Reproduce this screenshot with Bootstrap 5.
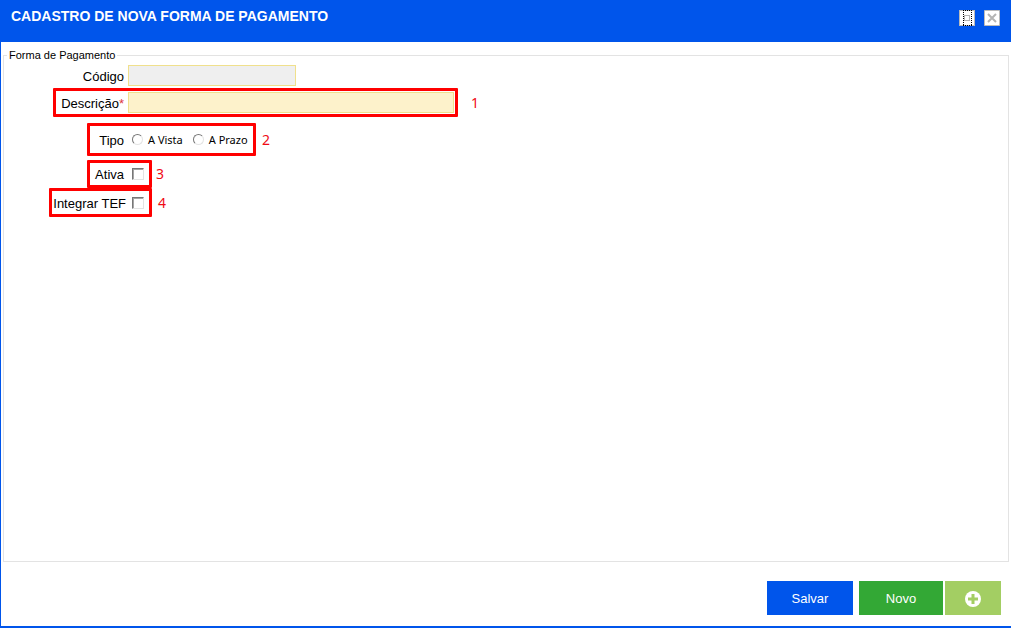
<!DOCTYPE html>
<html lang="pt-BR">
<head>
<meta charset="utf-8">
<meta name="viewport" content="width=device-width, initial-scale=1">
<title>Cadastro de nova forma de pagamento</title>
<link rel="stylesheet" href="https://cdn.jsdelivr.net/npm/bootstrap@5.3.0/dist/css/bootstrap.min.css">
<style>
  :root { --brand: #0055eb; }
  body { font-family: "Liberation Sans", Arial, sans-serif; font-size: 13px; line-height: 16px; color: #000; background: #fff; }
  .window { border-left: 1px solid var(--brand); border-bottom: 2px solid var(--brand); }
  .titlebar { background: var(--brand); color: #fff; height: 42px; padding: 8px 11px 0 10px; }
  .titlebar h1 { font-size: 14px; line-height: 16px; font-weight: 700; }
  .tools { gap: 9px; }
  .tool { width: 16px; height: 16px; margin-top: 2px; }
  .tool svg { width: 16px; height: 16px; display: block; }
  .group { border: 1px solid #e3e3e3; margin: 7px 2px 0; padding-top: 3px; }
  .group legend { font-size: 11px; line-height: 13px; margin-left: 3px; padding: 0 2px; }
  .field-label { white-space: nowrap; text-align: right; margin-right: 4px; padding-top: 2px; }
  .text-field { height: 21px; border: 1px solid #f0e08c; border-radius: 0; background: #fdf2cb; padding: 1px 4px; font-size: 13px; }
  .text-field:disabled { background: #efefef; }
  .code-row { margin: 0 0 2px 52px; }
  .code-row .field-label { width: 68px; }
  .code-row .text-field { width: 168px; }
  .type-row { margin-top: 6px; }
  .marked { border: 3px solid #f00; border-radius: 1px; }
  .mark-wide { margin-left: 49px; height: 29px; }
  .mark-wide .field-label { width: 68px; }
  .mark-wide .text-field { width: 326px; margin-right: 1px; }
  .mark-tipo, .mark-ativa { margin-left: 83px; }
  .mark-tipo .field-label, .mark-ativa .field-label { width: 34px; }
  .mark-tipo { height: 33px; width: 169px; }
  .mark-ativa { height: 28px; width: 65px; }
  .mark-tef { margin-left: 45px; height: 29px; width: 103px; }
  .mark-tef .field-label { width: 74px; margin-right: 2px; }
  .mark-number { font: 14px/20px "Noto Sans", sans-serif; color: #f00a14; margin-left: 6px; }
  .mark-wide + .mark-number { margin-left: 13px; }
  .choice { appearance: none; margin: 0 0 0 4px; width: 12px; height: 12px; background: #fff; border: 1px solid; border-color: #777 #e3e3e3 #e3e3e3 #777; flex: none; }
  .choice[type=checkbox] { box-shadow: inset 1px 1px #a5a5a5; }
  .choice[type=radio] { border-radius: 50%; width: 11px; height: 11px; }
  .choice:checked { background: #333; background-clip: content-box; padding: 2px; }
  .option-label { font: 11px/16px "Noto Sans", Tahoma, sans-serif; white-space: nowrap; margin-left: 5px; }
  .option-label + .choice { margin-left: 10px; }
  .actions { padding: 19px 10px 11px; }
  .action { height: 34px; border: 0; border-radius: 0; padding: 1px 0 0; color: #fff; font-size: 13px; }
  .action:hover { color: #fff; filter: brightness(.95); }
  .save { background: var(--brand); width: 86px; margin-right: 6px; }
  .new { background: #33a835; width: 84px; margin-right: 2px; }
  .more { background: #a3ce63; width: 56px; }
</style>
</head>
<body>
<div class="window min-vh-100 d-flex flex-column">
  <header class="titlebar d-flex justify-content-between">
    <h1 class="m-0">CADASTRO DE NOVA FORMA DE PAGAMENTO</h1>
    <div class="tools d-flex">
      <button type="button" class="tool btn p-0 border-0" aria-label="Maximizar">
        <svg viewBox="0 0 16 16" shape-rendering="crispEdges"><path fill="#fff" stroke="#bbb" d="M.5.5h15v15H.5z"/><path fill="none" stroke="#b4b4b4" d="M5.500 5.500h5v5h-5z"/><path fill="none" stroke="#000" stroke-dasharray="1 1" d="M4 .5h9M4 15.500h9M4.500 0v16M12.500 0v16"/></svg>
      </button>
      <button type="button" class="tool btn p-0 border-0" aria-label="Fechar">
        <svg viewBox="0 0 16 16"><path fill="#fff" stroke="#bbb" d="M.5.5h15v15H.5z"/><path fill="none" stroke="#b4b4b4" stroke-width="2" d="M4 4l8 8M12 4l-8 8"/></svg>
      </button>
    </div>
  </header>
  <form class="flex-grow-1 d-flex flex-column" onsubmit="return false">
    <fieldset class="group flex-grow-1">
      <legend class="float-none w-auto mb-0">Forma de Pagamento</legend>
      <div class="code-row d-flex align-items-center">
        <label class="field-label" for="codigo">Código</label>
        <input id="codigo" class="text-field" type="text" disabled>
      </div>
      <div class="d-flex align-items-center">
        <div class="marked mark-wide d-flex align-items-center">
          <label class="field-label" for="descricao">Descrição<span class="text-danger">*</span></label>
          <input id="descricao" class="text-field" type="text" required>
        </div>
        <span class="mark-number">1</span>
      </div>
      <div class="type-row d-flex align-items-center">
        <div class="marked mark-tipo d-flex align-items-center" role="radiogroup" aria-labelledby="tipo">
          <span class="field-label" id="tipo">Tipo</span>
          <input class="choice" type="radio" name="tipo" id="vista"><label class="option-label" for="vista">A Vista</label>
          <input class="choice" type="radio" name="tipo" id="prazo"><label class="option-label" for="prazo">A Prazo</label>
        </div>
        <span class="mark-number">2</span>
      </div>
      <div class="d-flex align-items-center mt-1">
        <div class="marked mark-ativa d-flex align-items-center">
          <label class="field-label" for="ativa">Ativa</label><input class="choice" type="checkbox" id="ativa">
        </div>
        <span class="mark-number ms-1">3</span>
      </div>
      <div class="d-flex align-items-center">
        <div class="marked mark-tef d-flex align-items-center">
          <label class="field-label" for="tef">Integrar TEF</label><input class="choice" type="checkbox" id="tef">
        </div>
        <span class="mark-number">4</span>
      </div>
    </fieldset>
    <footer class="actions d-flex justify-content-end">
      <button type="submit" class="action btn save">Salvar</button>
      <button type="button" class="action btn new">Novo</button>
      <button type="button" class="action btn more d-flex align-items-center justify-content-center" aria-label="Adicionar">
        <svg width="16" height="16" viewBox="0 0 16 16"><circle cx="8" cy="8" r="8" fill="#fff"/><path fill="none" stroke="#a3ce63" stroke-width="3" d="M8 3v10M3 8h10"/></svg>
      </button>
    </footer>
  </form>
</div>
<script src="https://cdn.jsdelivr.net/npm/bootstrap@5.3.0/dist/js/bootstrap.bundle.min.js"></script>
</body>
</html>
